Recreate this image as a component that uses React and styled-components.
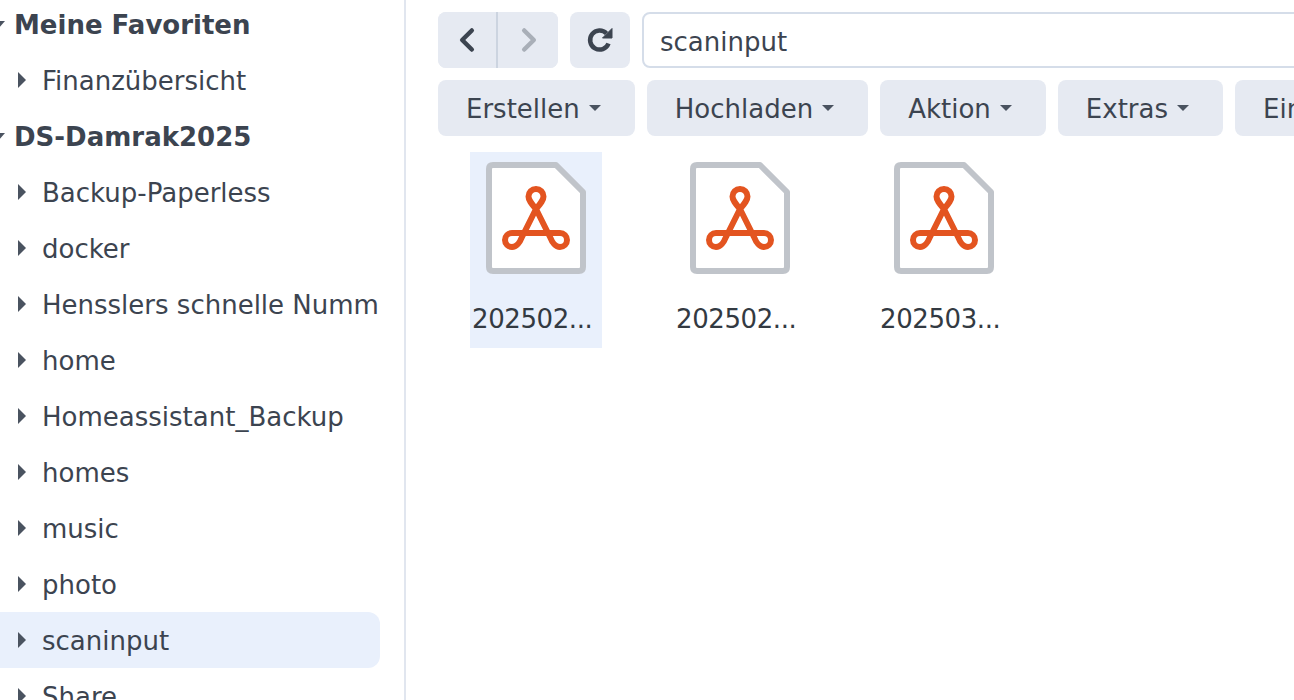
import React from 'react'
import styled, { createGlobalStyle } from 'styled-components'

const GlobalStyle = createGlobalStyle`
  html, body {
    margin: 0;
    height: 100%;
    overflow: hidden;
    background: #fff;
  }
  body {
    font-family: "DejaVu Sans", Verdana, sans-serif;
    color: #3c4450;
  }
`

const Page = styled.div`
  display: flex;
  width: 1294px;
  height: 700px;
  overflow: hidden;
`
const Sidebar = styled.aside`
  flex: none;
  width: 406px;
  height: 700px;
  box-sizing: border-box;
  border-right: 2px solid #e1e6ef;
  overflow: hidden;
`
const Tree = styled.ul`
  list-style: none;
  margin: -4px 0 0;
  padding: 0 24px 0 0;
`
const Row = styled.li`
  display: flex;
  align-items: center;
  height: 56px;
  box-sizing: border-box;
  padding-top: 2px;
  border-radius: ${p => (p.$selected ? '0 12px 12px 0' : '0')};
  background: ${p => (p.$selected ? '#e9f0fc' : 'transparent')};
  overflow: hidden;
  white-space: nowrap;
  font-size: 26px;
`
const RootRow = styled(Row)`
  font-weight: 700;
  padding-left: 14px;
  position: relative;
`
const RootCaret = styled.span`
  position: absolute;
  left: -7px;
  top: 25px;
  border-left: 6px solid transparent;
  border-right: 6px solid transparent;
  border-top: 7px solid #4a5360;
`
const Caret = styled.span`
  flex: none;
  width: 0;
  height: 0;
  margin: -2px 16px 0 18px;
  border-top: 8px solid transparent;
  border-bottom: 8px solid transparent;
  border-left: 8px solid #4a5360;
`
const Main = styled.main`
  flex: 1;
  min-width: 0;
  overflow: hidden;
  padding: 12px 0 0 32px;
`
const Toolbar = styled.div`
  display: flex;
  gap: 12px;
  height: 56px;
  margin-bottom: 12px;
`
const NavGroup = styled.div`
  flex: none;
  display: grid;
  grid-template-columns: 58px 2px 60px;
  width: 120px;
  border-radius: 8px;
  overflow: hidden;
  background: #e6eaf2;
`
const NavDivider = styled.span`
  background: #ccd4e0;
`
const IconButton = styled.button`
  flex: none;
  width: ${p => (p.$wide ? '60px' : 'auto')};
  display: flex;
  align-items: center;
  justify-content: center;
  padding: 0;
  border: 0;
  border-radius: ${p => (p.$wide ? '8px' : '0')};
  background: #e6eaf2;
`
const PathBox = styled.div`
  flex: none;
  width: 900px;
  box-sizing: border-box;
  display: flex;
  align-items: center;
  padding: 4px 16px 0;
  border: 2px solid #d5dde9;
  border-radius: 8px;
  font-size: 26px;
`
const Action = styled.button`
  flex: none;
  display: flex;
  align-items: center;
  gap: 9px;
  height: 56px;
  padding: 2px 34px 0 28px;
  border: 0;
  border-radius: 8px;
  background: #e6eaf2;
  color: inherit;
  font: inherit;
  font-size: 26px;
`
const DropCaret = styled.span`
  margin-top: -2px;
  width: 0;
  height: 0;
  border-left: 6px solid transparent;
  border-right: 6px solid transparent;
  border-top: 6px solid #4a5360;
`
const Files = styled.div`
  display: flex;
  gap: 72px;
  margin: 16px 0 0 32px;
`
const FileItem = styled.div`
  width: 132px;
  height: 196px;
  padding-top: 10px;
  box-sizing: border-box;
  display: flex;
  flex-direction: column;
  align-items: center;
  background: ${p => (p.$selected ? '#e9f0fc' : 'transparent')};
`
const FileName = styled.div`
  align-self: flex-start;
  margin: 28px 0 0 2px;
  font-size: 26px;
  line-height: 34px;
  letter-spacing: -0.4px;
  color: #333a42;
  white-space: nowrap;
`

const folders = [
  { name: 'Meine Favoriten', root: true },
  { name: 'Finanzübersicht' },
  { name: 'DS-Damrak2025', root: true },
  { name: 'Backup-Paperless' },
  { name: 'docker' },
  { name: 'Hensslers schnelle Nummer' },
  { name: 'home' },
  { name: 'Homeassistant_Backup' },
  { name: 'homes' },
  { name: 'music' },
  { name: 'photo' },
  { name: 'scaninput', selected: true },
  { name: 'Share' },
]

const actions = ['Erstellen', 'Hochladen', 'Aktion', 'Extras']
const files = ['202502...', '202502...', '202503...']

const Chevron = ({ left, color }) => (
  <svg width="20" height="28" viewBox="0 0 20 28" fill="none">
    <path
      d={left ? 'M14.8 4.5 L5.2 14 L14.8 23.5' : 'M6.2 4.5 L15.8 14 L6.2 23.5'}
      stroke={color}
      strokeWidth="4.5"
      strokeLinecap="round"
      strokeLinejoin="round"
    />
  </svg>
)

const RefreshIcon = () => (
  <svg width="28" height="28" viewBox="0 0 28 28" fill="none">
    <path d="M20.5 7.5 A9.5 9.5 0 1 0 22.5 17.5" stroke="#3c4450" strokeWidth="4.5" />
    <path d="M26 2.5 V12 H16.5 Z" fill="#3c4450" stroke="#3c4450" strokeWidth="1" strokeLinejoin="round" />
  </svg>
)

const PdfIcon = () => (
  <svg width="100" height="112" viewBox="0 0 100 112" fill="none">
    <path
      d="M7 3 H70 L97 30 V105 Q97 109 93 109 H7 Q3 109 3 105 V7 Q3 3 7 3 Z"
      fill="#fff"
      stroke="#c0c4ca"
      strokeWidth="6"
      strokeLinejoin="round"
    />
    <path
      d="M50 47 C45 41 42.5 38 42.5 34.5 a7.5 7.5 0 0 1 15 0 C57.5 38 55 41 50 47 L64.5 76 C66 80 69.5 85 74 85 a7 7 0 0 0 0 -14 H26 a7 7 0 0 0 0 14 C30.5 85 34 80 35.5 76 L50 47 Z"
      stroke="#e35420"
      strokeWidth="6"
      strokeLinejoin="round"
    />
  </svg>
)

const App = () => {
  return (
    <Page>
      <GlobalStyle />
      <Sidebar>
        <Tree>
          {folders.map(folder =>
            folder.root ? (
              <RootRow key={folder.name}>
                <RootCaret />
                {folder.name}
              </RootRow>
            ) : (
              <Row key={folder.name} $selected={folder.selected}>
                <Caret />
                {folder.name}
              </Row>
            )
          )}
        </Tree>
      </Sidebar>
      <Main>
        <Toolbar>
          <NavGroup>
            <IconButton><Chevron left color="#3c4450" /></IconButton>
            <NavDivider />
            <IconButton><Chevron color="#a9afb8" /></IconButton>
          </NavGroup>
          <IconButton $wide><RefreshIcon /></IconButton>
          <PathBox>scaninput</PathBox>
        </Toolbar>
        <Toolbar>
          {actions.map(label => (
            <Action key={label}>
              {label}
              <DropCaret />
            </Action>
          ))}
          <Action>Einstellungen</Action>
        </Toolbar>
        <Files>
          {files.map((name, index) => (
            <FileItem key={index} $selected={index === 0}>
              <PdfIcon />
              <FileName>{name}</FileName>
            </FileItem>
          ))}
        </Files>
      </Main>
    </Page>
  )
}

export default App
